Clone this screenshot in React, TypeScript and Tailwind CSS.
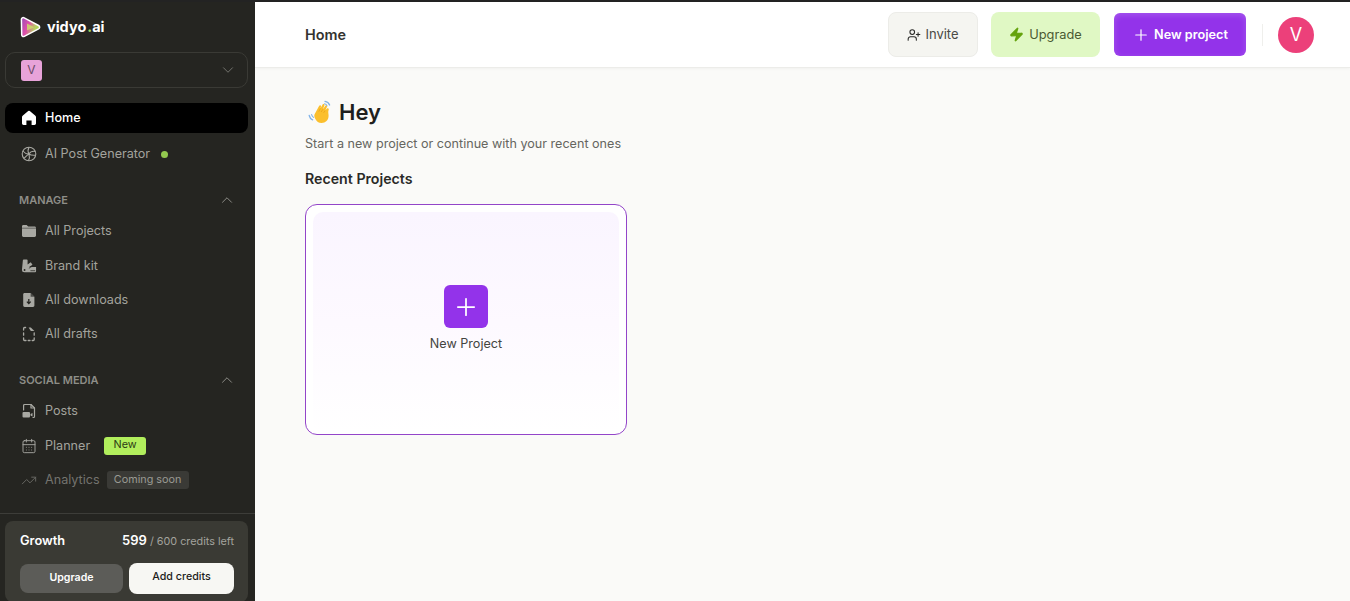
import React from "react";
import { ChevronDown, ChevronUp, Plus, Zap, CalendarDays, TrendingUp, UserPlus } from "lucide-react";

function Logo() {
  return (
    <svg width="22" height="22" viewBox="0 0 22 22">
      <defs>
        <linearGradient id="lg" x1="0" y1="0.2" x2="1" y2="0.6">
          <stop offset="0" stopColor="#a24bb5" />
          <stop offset="0.4" stopColor="#e14fa9" />
          <stop offset="0.75" stopColor="#b9cf63" />
          <stop offset="1" stopColor="#a9d84f" />
        </linearGradient>
      </defs>
      <path d="M2.4 3.6 C2.3 1.9 3.9 1.1 5.2 1.8 L19.6 9.5 C21 10.3 21 12 19.6 12.8 L5.3 20.4 C3.9 21 2.7 20.2 2.7 18.7 Z" fill="url(#lg)" stroke="#fff" strokeWidth="1.5" strokeLinejoin="round" />
      <path d="M8 7.6 L15.2 11.2 L8 14.6 Z" fill="#c9dc6b" opacity="0.85" />
    </svg>
  );
}

function Wave() {
  return (
    <svg width="25" height="24" viewBox="0 0 25 24">
      <path d="M1.2 15.5 C1.6 17.5 2.8 19 4.6 19.8" stroke="#7fb2e8" strokeWidth="1.3" fill="none" strokeLinecap="round" />
      <path d="M3.6 14.6 C3.9 15.8 4.6 16.8 5.6 17.4" stroke="#7fb2e8" strokeWidth="1.1" fill="none" strokeLinecap="round" />
      <path d="M17 1.4 C19 1.6 20.8 2.9 21.6 5" stroke="#7fb2e8" strokeWidth="1.3" fill="none" strokeLinecap="round" />
      <path d="M16.4 3.8 C17.6 4 18.6 4.8 19 6" stroke="#7fb2e8" strokeWidth="1.1" fill="none" strokeLinecap="round" />
      <path d="M6.6 14.3 L11.2 5.8 C11.8 4.7 13.4 5.4 13 6.6 L12.4 8.4 L14.6 4.6 C15.3 3.5 16.9 4.3 16.4 5.5 L14.9 9.2 L17.2 5.9 C18 4.9 19.4 5.8 18.9 7 L17.2 10.6 L19 8.6 C19.9 7.7 21.2 8.7 20.7 9.8 C19.8 12 20.6 13.6 20.6 15.8 C20.6 20 17.5 23 13.6 23 C10.6 23 8.6 21.6 7.2 18.8 C6.4 17.2 6 15.6 6.6 14.3 Z" fill="#fbbf2d" />
      <path d="M12.4 8.4 L10.8 11.6 M14.9 9.2 L13.2 12 M17.2 10.6 L15.6 12.8" stroke="#e8a015" strokeWidth="0.7" fill="none" />
    </svg>
  );
}

const G = "#a8a8a2";
const D = "#252521";

function HomeGlyph() {
  return (
    <svg width="16" height="16" viewBox="0 0 16 16">
      <path fillRule="evenodd" d="M7.2 1.1 a1.3 1.3 0 0 1 1.6 0 l5.3 4.3 c.6.4.9 1 .9 1.7 v6.2 c0 .9-.7 1.7-1.6 1.7 H10.6 V10.4 H5.4 V15 H2.6 C1.7 15 1 14.2 1 13.3 V7.1 c0-.7.3-1.3.9-1.7 Z" fill="#fff" />
    </svg>
  );
}

function FolderGlyph() {
  return (
    <svg width="16" height="16" viewBox="0 0 16 16">
      <path d="M1 3.4 C1 2.6 1.6 2 2.4 2 H5.6 L7.2 3.6 H13.6 C14.4 3.6 15 4.2 15 5 V12.6 C15 13.4 14.4 14 13.6 14 H2.4 C1.6 14 1 13.4 1 12.6 Z" fill={G} />
      <path d="M1 5.2 H15" stroke={D} strokeWidth="0.5" />
    </svg>
  );
}

function BrandIcon() {
  return (
    <svg width="17" height="16" viewBox="0 0 17 16" fill={G}>
      <path d="M3 1 H6 a1 1 0 0 1 1 1 V6.4 L10.4 4 l1.8 2.8 L8.6 9 H16 V13.6 a1 1 0 0 1 -1 1 H3.4 A2.4 2.4 0 0 1 1 12.2 L2 2 a1 1 0 0 1 1 -1 z" />
      <path d="M8.4 10.4 L12 8.2 M10 13 H15" stroke={D} strokeWidth="0.8" />
      <circle cx="3.8" cy="12.2" r="1" fill={D} />
    </svg>
  );
}

function DownloadGlyph() {
  return (
    <svg width="16" height="16" viewBox="0 0 16 16">
      <path d="M3.6 1 H9.6 L13.4 4.8 V13.6 C13.4 14.4 12.8 15 12 15 H3.6 C2.8 15 2.2 14.4 2.2 13.6 V2.4 C2.2 1.6 2.8 1 3.6 1 Z" fill={G} />
      <path d="M9.6 1 V4.8 H13.4 Z" fill={D} opacity="0.7" />
      <path d="M7.8 7 V11.2 M5.9 9.6 L7.8 11.6 L9.7 9.6" stroke={D} strokeWidth="1.3" fill="none" />
    </svg>
  );
}

function DraftIcon() {
  return (
    <svg width="16" height="16" viewBox="0 0 16 16" fill="none" stroke={G} strokeWidth="1.3" strokeLinecap="round">
      <path d="M4.6 1.5 H3.6 a1 1 0 0 0 -1 1 V4 M2.6 7 v2.2 M2.6 12 v1.5 a1 1 0 0 0 1 1 H5 M7.2 14.5 h1.8 M11.2 14.5 h1 a1 1 0 0 0 1 -1 V12 M13.2 9.2 V7" />
      <path d="M7.6 1.5 H9.8 L13.4 5 H9.8 Z" fill={G} stroke="none" />
    </svg>
  );
}

function PostIcon() {
  return (
    <svg width="16" height="16" viewBox="0 0 16 16" fill="none" stroke={G} strokeWidth="1.2" strokeLinecap="round" strokeLinejoin="round">
      <path d="M2.6 7 V2.5 a1 1 0 0 1 1 -1 h6.4 l3.5 3.5 V13.5 a1 1 0 0 1 -1 1 H12" />
      <path d="M10 1.5 V5 H13.5" />
      <rect x="1.5" y="9" width="7.5" height="5.5" rx="1" fill={G} stroke="none" />
      <path d="M9.5 11 l2 -1 v3.5 l-2 -1" fill={G} stroke="none" />
    </svg>
  );
}

function Apert() {
  return (
    <svg width="16" height="16" viewBox="0 0 16 16" fill="none" stroke={G} strokeWidth="1.1">
      <circle cx="8" cy="8" r="6.8" />
      <path d="M8 1.2 C6.8 3.4 6.8 6 8 8 C9 6.2 11.4 5 14.2 5.4 M14.6 9.2 C12.4 9.4 9.8 9.4 8 8 C8.6 10 8.6 12.6 7.4 14.8 M2.8 12.4 C4.4 11 6 9 8 8 C6 8.2 3.6 7 1.8 5" />
    </svg>
  );
}

function Row({ icon, label, extra, dim, className = "" }: { icon: React.ReactNode; label: string; extra?: React.ReactNode; dim?: boolean; className?: string }) {
  return (
    <div className={`flex items-center h-[20px] shrink-0 pl-[21px] ${className}`}>
      <span className={`w-[16px] h-[16px] flex items-center justify-center ${dim ? "opacity-50" : ""}`}>{icon}</span>
      <span className={`ml-[8px] text-[12.6px] leading-[20px] ${dim ? "text-[#73736e]" : "text-[#a3a39d]"}`}>{label}</span>
      {extra}
    </div>
  );
}

function Section({ label, className = "" }: { label: string; className?: string }) {
  return (
    <div className={`flex items-center justify-between h-[16px] shrink-0 pl-[19px] pr-[19px] ${className}`}>
      <span className="text-[11px] font-semibold text-[#8e8e88] leading-[16px]">{label}</span>
      <ChevronUp size={18} className="text-[#8e8e88]" strokeWidth={1.3} />
    </div>
  );
}

export default function App() {
  return (
    <div className="h-[601px] w-[1350px] flex flex-col overflow-hidden bg-[#fafaf8] font-['Inter',sans-serif]">
      <div className="h-[2px] bg-[#232323] shrink-0" />
      <div className="flex flex-1 min-h-0">
        <aside className="w-[255px] shrink-0 bg-[#252521] flex flex-col overflow-hidden">
          <div className="flex items-center h-[50px] shrink-0 pl-[19px] gap-[6px]">
            <Logo />
            <span className="text-[14.5px] font-bold text-white leading-none">
              vidyo<span className="text-[#a3d65c] ml-[1px]">.</span>ai
            </span>
          </div>
          <div className="mx-[5px] w-[243px] h-[36px] shrink-0 rounded-[10px] border border-[#3a3a35] flex items-center justify-between pl-[15px] pr-[10px]">
            <div className="w-[21px] h-[21px] rounded-[3px] bg-[#e8a3d9] text-[#6b4a68] text-[12px] flex items-center justify-center">V</div>
            <ChevronDown size={18} className="text-[#73736e]" strokeWidth={1.3} />
          </div>
          <div className="mx-[5px] w-[243px] mt-[15px] h-[30px] shrink-0 rounded-[8px] bg-black flex items-center pl-[16px]">
            <HomeGlyph />
            <span className="ml-[8px] text-[12.6px] font-medium text-white">Home</span>
          </div>
          <Row className="mt-[11px]" icon={<Apert />} label="AI Post Generator" extra={<span className="ml-[11px] w-[7px] h-[7px] rounded-full bg-[#93c94f]" />} />
          <Section label="MANAGE" className="mt-[28px]" />
          <Row className="mt-[13px]" icon={<FolderGlyph />} label="All Projects" />
          <Row className="mt-[15px]" icon={<BrandIcon />} label="Brand kit" />
          <Row className="mt-[14px]" icon={<DownloadGlyph />} label="All downloads" />
          <Row className="mt-[14px]" icon={<DraftIcon />} label="All drafts" />
          <Section label="SOCIAL MEDIA" className="mt-[28px]" />
          <Row className="mt-[13px]" icon={<PostIcon />} label="Posts" />
          <Row className="mt-[15px]" icon={<CalendarDays size={16} className="text-[#a8a8a2]" strokeWidth={1.4} />} label="Planner" extra={
            <span className="ml-[14px] w-[42px] h-[18px] -mt-[1px] rounded-[3px] bg-[#b1ee5c] text-[#2b3a14] text-[10.8px] leading-[15px] text-center">New</span>
          } />
          <Row className="mt-[14px]" dim icon={<TrendingUp size={17} className="text-[#a8a8a2]" strokeWidth={1.5} />} label="Analytics" extra={
            <span className="ml-[7px] w-[82px] h-[18px] -mt-[1px] rounded-[3px] bg-[#3a3a36] text-[#9a9a94] text-[10.8px] leading-[17px] text-center">Coming soon</span>
          } />
          <div className="mt-[23px] h-[88px] shrink-0 border-t border-[#3d3d39] px-[5px] pt-[7px]">
            <div className="w-[243px] h-[81px] rounded-[8px] bg-[#3a3a34] pl-[15px] pr-[14px] pt-[10px]">
              <div className="flex items-center justify-between h-[20px]">
                <span className="text-[12.8px] font-semibold text-white">Growth</span>
                <span className="text-[10.8px] text-[#a3a39d]"><span className="text-[13px] font-semibold text-white">599</span> / 600 credits left</span>
              </div>
              <div className="flex gap-[6px] mt-[12px] items-center">
                <div className="w-[103px] h-[29px] pb-[2px] rounded-[8px] bg-[#5c5c58] text-white text-[10.6px] font-semibold flex items-center justify-center">Upgrade</div>
                <div className="w-[105px] h-[31px] pb-[2px] rounded-[8px] bg-[#f7f7f3] text-[#1d1d1b] text-[10.7px] font-medium flex items-center justify-center">Add credits</div>
              </div>
            </div>
          </div>
        </aside>
        <main className="flex-1 min-w-0 flex flex-col">
          <header className="h-[66px] shrink-0 bg-white border-b border-[#ecece9] shadow-[0_1px_3px_rgba(0,0,0,0.04)] flex items-center pl-[50px] pr-[36px]">
            <span className="text-[14.4px] font-semibold text-[#33332f]">Home</span>
            <div className="ml-auto flex items-center">
              <div className="w-[90px] h-[45px] rounded-[8px] bg-[#f5f5f1] border border-[#ecece8] flex items-center justify-center gap-[4px] text-[13px] text-[#4a4a46]">
                <UserPlus size={14} strokeWidth={1.8} className="text-[#2a2a28]" />Invite
              </div>
              <div className="ml-[13px] w-[109px] h-[45px] rounded-[8px] bg-[#e0f8c4] flex items-center justify-center gap-[5px] text-[12.8px] text-[#4a5a32]">
                <Zap size={15} fill="#65a30d" className="text-[#65a30d]" />Upgrade
              </div>
              <div className="ml-[14px] w-[132px] h-[43px] rounded-[6px] bg-[#9333ea] shadow-[inset_0_2px_6px_rgba(255,255,255,0.18)] flex items-center justify-center gap-[4px] text-[12.7px] font-semibold text-white">
                <Plus size={18} strokeWidth={1.6} />New project
              </div>
              <div className="ml-[16px] w-px h-[22px] bg-[#efefec]" />
              <div className="ml-[15px] w-[36px] h-[36px] rounded-full bg-[#ec407a] text-white text-[18px] flex items-center justify-center">V</div>
            </div>
          </header>
          <div className="pl-[50px] pt-[29px] flex-1">
            <div className="flex items-center h-[30px]">
              <span className="ml-[3px] w-[25px] h-[24px] shrink-0"><Wave /></span>
              <h1 className="ml-[6px] text-[22px] font-semibold text-[#1f1f1d] leading-[30px]">Hey</h1>
            </div>
            <p className="mt-[7px] text-[12.6px] leading-[20px] text-[#666660]">Start a new project or continue with your recent ones</p>
            <h2 className="mt-[15px] text-[14.2px] font-semibold leading-[20px] text-[#2a2a27]">Recent Projects</h2>
            <div className="mt-[15px] w-[322px] h-[231px] rounded-[12px] border border-[#9345c9] bg-white p-[7px] pb-[1px]">
              <div className="h-full rounded-[10px] bg-gradient-to-b from-[#faf5ff] via-[#fdf9ff] to-[#ffffff] flex flex-col items-center pt-[73px]">
                <div className="w-[44px] h-[43px] rounded-[6px] bg-[#9333ea] flex items-center justify-center">
                  <Plus size={28} strokeWidth={1.5} className="text-white" />
                </div>
                <span className="mt-[8px] text-[12.6px] leading-[16px] text-[#44443f]">New Project</span>
              </div>
            </div>
          </div>
        </main>
      </div>
    </div>
  );
}
